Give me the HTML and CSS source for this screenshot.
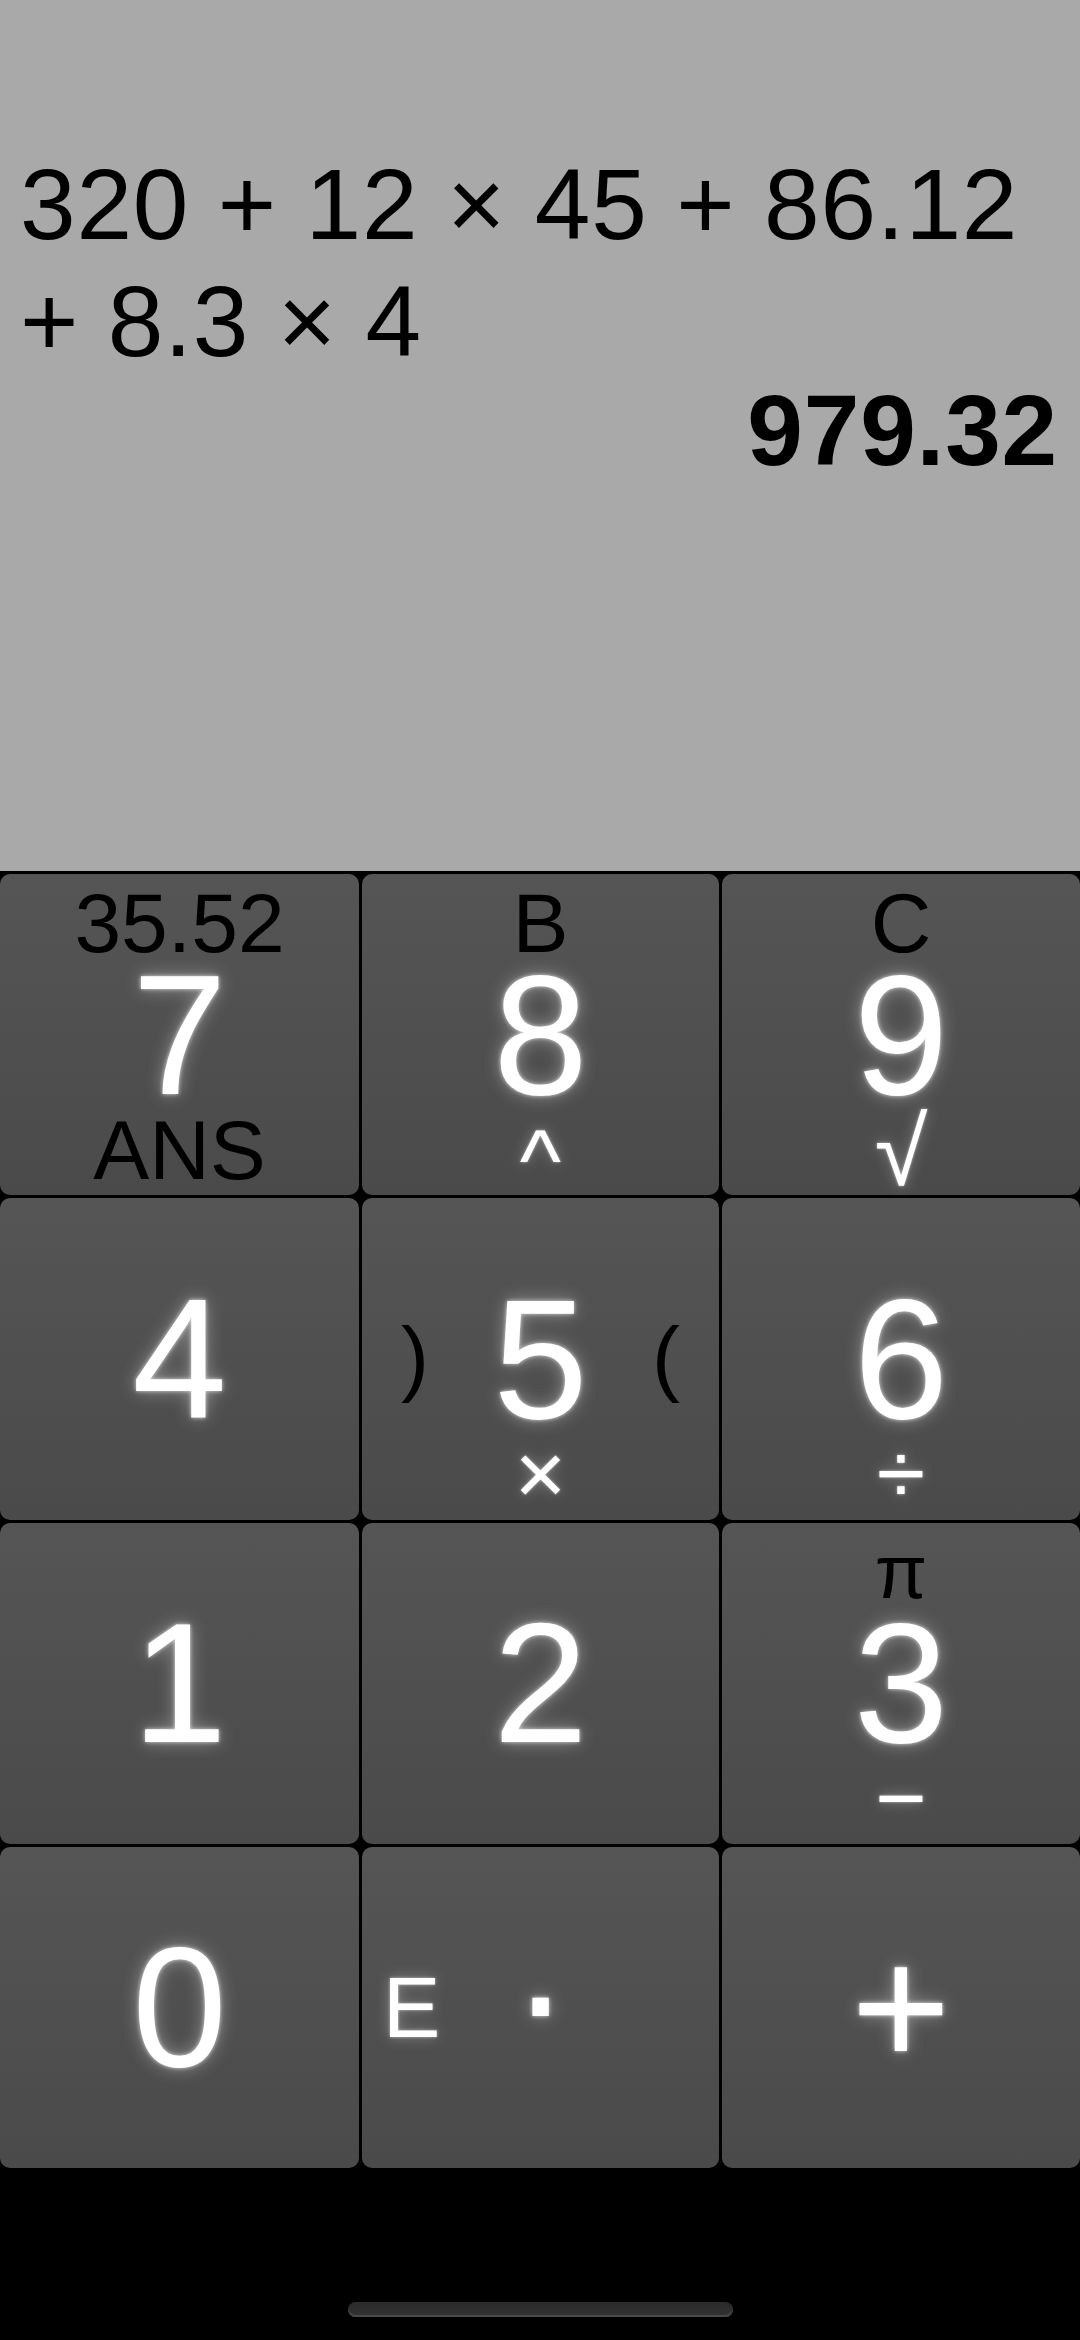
FILE: index.html
```html
<!DOCTYPE html>
<html lang="en">
<head>
<meta charset="utf-8">
<title>Calculator</title>
<link rel="stylesheet" href="styles.css">
</head>
<body>
<div class="screen">
  <div class="display">
    <div class="expr">320 + 12 × 45 + 86.12 + 8.3 × 4</div>
    <div class="result">979.32</div>
  </div>
  <div class="keypad">
    <div class="key">
      <span class="top">35.52</span>
      <span class="main">7</span>
      <span class="bottom dark">ANS</span>
    </div>
    <div class="key">
      <span class="top">B</span>
      <span class="main">8</span>
      <span class="bottom caret">^</span>
    </div>
    <div class="key">
      <span class="top">C</span>
      <span class="main">9</span>
      <span class="bottom root">√</span>
    </div>
    <div class="key">
      <span class="main">4</span>
    </div>
    <div class="key">
      <span class="side-l paren">)</span>
      <span class="main">5</span>
      <span class="side-r paren">(</span>
      <span class="bottom op">×</span>
    </div>
    <div class="key">
      <span class="main">6</span>
      <span class="bottom op">÷</span>
    </div>
    <div class="key">
      <span class="main">1</span>
    </div>
    <div class="key">
      <span class="main">2</span>
    </div>
    <div class="key">
      <span class="top pi">π</span>
      <span class="main">3</span>
      <span class="bottom op">−</span>
    </div>
    <div class="key">
      <span class="main">0</span>
    </div>
    <div class="key">
      <span class="side-l exp">E</span>
      <span class="main dot">.</span>
    </div>
    <div class="key">
      <span class="main">+</span>
    </div>
  </div>
  <div class="footer">
    <div class="home-indicator"></div>
  </div>
</div>
</body>
</html>
```
FILE: styles.css
```css
html, body {
  margin: 0;
  padding: 0;
  background: #000;
}

.screen {
  width: 1080px;
  height: 2340px;
  display: flex;
  flex-direction: column;
  background: #000;
  font-family: "Liberation Sans", Arial, sans-serif;
}

.display {
  height: 871px;
  box-sizing: border-box;
  padding: 146px 22px 0 20px;
  background: #a9a9a9;
  color: #000;
}

.expr {
  font-size: 100px;
  line-height: 117px;
  letter-spacing: 0.8px;
}

.result {
  font-size: 100px;
  line-height: 100px;
  font-weight: bold;
  letter-spacing: 0.8px;
  text-align: right;
}

.keypad {
  margin-top: 3px;
  height: 1294px;
  display: grid;
  grid-template-columns: 359px 357px 1fr;
  grid-template-rows: repeat(4, 1fr);
  gap: 3px;
}

.key {
  display: grid;
  grid-template-columns: minmax(0, 1fr) auto minmax(0, 1fr);
  grid-template-rows: minmax(0, 1fr) auto minmax(0, 1fr);
  border-radius: 10px;
  background: linear-gradient(#555555, #4a4a4a);
}

.main {
  grid-row: 2;
  grid-column: 2;
  font-size: 170px;
  line-height: 126px;
  color: #fff;
  text-shadow: 0 0 4px rgba(255, 255, 255, 0.75), 0 0 18px rgba(255, 255, 255, 0.4);
}

.top {
  grid-row: 1;
  grid-column: 1 / -1;
  justify-self: center;
  align-self: end;
  font-size: 84px;
  line-height: 62px;
  margin-bottom: 18px;
  color: #000;
}

.top.pi {
  font-size: 76px;
  margin-bottom: 17px;
}

.bottom {
  grid-row: 3;
  grid-column: 1 / -1;
  justify-self: center;
  align-self: start;
  font-size: 84px;
  line-height: 62px;
  margin-top: 21px;
  color: #fff;
  text-shadow: 0 0 3px rgba(255, 255, 255, 0.6), 0 0 14px rgba(255, 255, 255, 0.35);
}

.bottom.dark {
  color: #000;
  text-shadow: none;
}

.bottom.caret {
  font-size: 88px;
  margin-top: 32px;
}

.bottom.root {
  font-size: 96px;
  margin-top: 23px;
}

.bottom.op {
  font-size: 88px;
  margin-top: 21px;
}

.side-l,
.side-r {
  grid-row: 2;
  align-self: center;
  font-size: 84px;
  line-height: 84px;
}

.side-l {
  grid-column: 1;
  justify-self: start;
}

.side-r {
  grid-column: 3;
  justify-self: end;
}

.paren {
  color: #000;
  margin-bottom: 4px;
}

.side-l.paren {
  margin-left: 39px;
}

.side-r.paren {
  margin-right: 39px;
}

.exp {
  margin-left: 21px;
  font-size: 86px;
  line-height: 86px;
  color: #fff;
  text-shadow: 0 0 3px rgba(255, 255, 255, 0.6), 0 0 14px rgba(255, 255, 255, 0.35);
}

.dot {
  transform: translateY(-50px);
}

.footer {
  flex: 1;
  display: flex;
  justify-content: center;
  padding-top: 134px;
}

.home-indicator {
  width: 385px;
  height: 15px;
  border-radius: 8px;
  background: linear-gradient(#2a2a2a, #333333);
  box-shadow: inset 0 -2px 0 #4a4a4a;
}
```
